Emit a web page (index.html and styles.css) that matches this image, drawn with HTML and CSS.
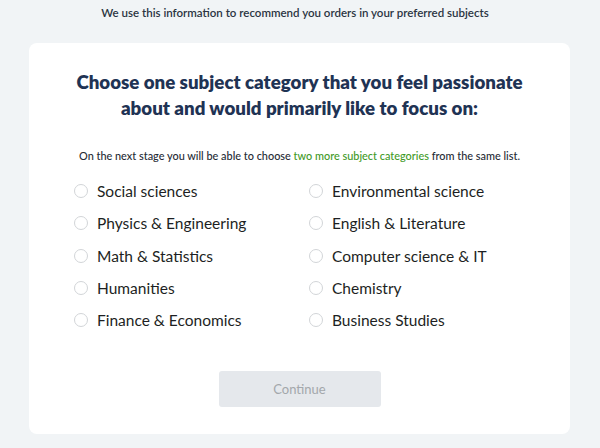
FILE: index.html
```html
<!DOCTYPE html>
<html>
<head>
<meta charset="utf-8">
<link rel="stylesheet" href="styles.css">
</head>
<body>
<div class="page">
  <p class="intro">We use this information to recommend you orders in your preferred subjects</p>
  <div class="card">
    <h1 class="title">Choose one subject category that you feel passionate<br>about and would primarily like to focus on:</h1>
    <p class="note">On the next stage you will be able to choose <span class="accent">two more subject categories</span> from the same list.</p>
    <div class="options">
      <label class="option"><span class="radio"></span>Social sciences</label>
      <label class="option"><span class="radio"></span>Environmental science</label>
      <label class="option"><span class="radio"></span>Physics &amp; Engineering</label>
      <label class="option"><span class="radio"></span>English &amp; Literature</label>
      <label class="option"><span class="radio"></span>Math &amp; Statistics</label>
      <label class="option"><span class="radio"></span>Computer science &amp; IT</label>
      <label class="option"><span class="radio"></span>Humanities</label>
      <label class="option"><span class="radio"></span>Chemistry</label>
      <label class="option"><span class="radio"></span>Finance &amp; Economics</label>
      <label class="option"><span class="radio"></span>Business Studies</label>
    </div>
    <div class="actions">
      <button class="btn" disabled>Continue</button>
    </div>
  </div>
</div>
</body>
</html>
```

FILE: styles.css
```css
* { box-sizing: border-box; }
html, body {
  margin: 0;
  padding: 0;
  background: #f1f4f6;
  font-family: Lato, "Open Sans", sans-serif;
}
.page {
  width: 600px;
  height: 448px;
  padding: 0 30px 0 29px;
  overflow: hidden;
}
.intro {
  margin: 0 0 0 -9px;
  padding-top: 6px;
  height: 43px;
  text-align: center;
  font-size: 11.5px;
  font-weight: 600;
  color: #2b3442;
  line-height: 14px;
}
.card {
  background: #fff;
  border-radius: 8px;
  width: 541px;
  height: 391px;
  padding-top: 26px;
}
.title {
  margin: 0;
  text-align: center;
  font-size: 18.7px;
  font-weight: 800;
  line-height: 26px;
  color: #1f3354;
}
.note {
  margin: 28px 0 0;
  text-align: center;
  font-size: 10.9px;
  font-weight: 500;
  line-height: 14px;
  color: #262b35;
}
.accent {
  color: #3f9a27;
}
.options {
  display: grid;
  grid-template-columns: 235px 235px;
  grid-auto-rows: 32.3px;
  margin: 12px 0 0 45px;
}
.option {
  display: flex;
  align-items: center;
  gap: 9px;
  font-size: 15.5px;
  color: #1d1f23;
}
.radio {
  width: 14px;
  height: 14px;
  border: 1px solid #d2d5d8;
  border-radius: 50%;
  flex: none;
}
.actions {
  display: flex;
  justify-content: center;
  margin-top: 35px;
}
.btn {
  width: 162px;
  height: 36px;
  border: 0;
  border-radius: 3px;
  background: #e5e8ec;
  color: #a3a7ab;
  font-family: Lato, sans-serif;
  font-size: 13px;
}
```
